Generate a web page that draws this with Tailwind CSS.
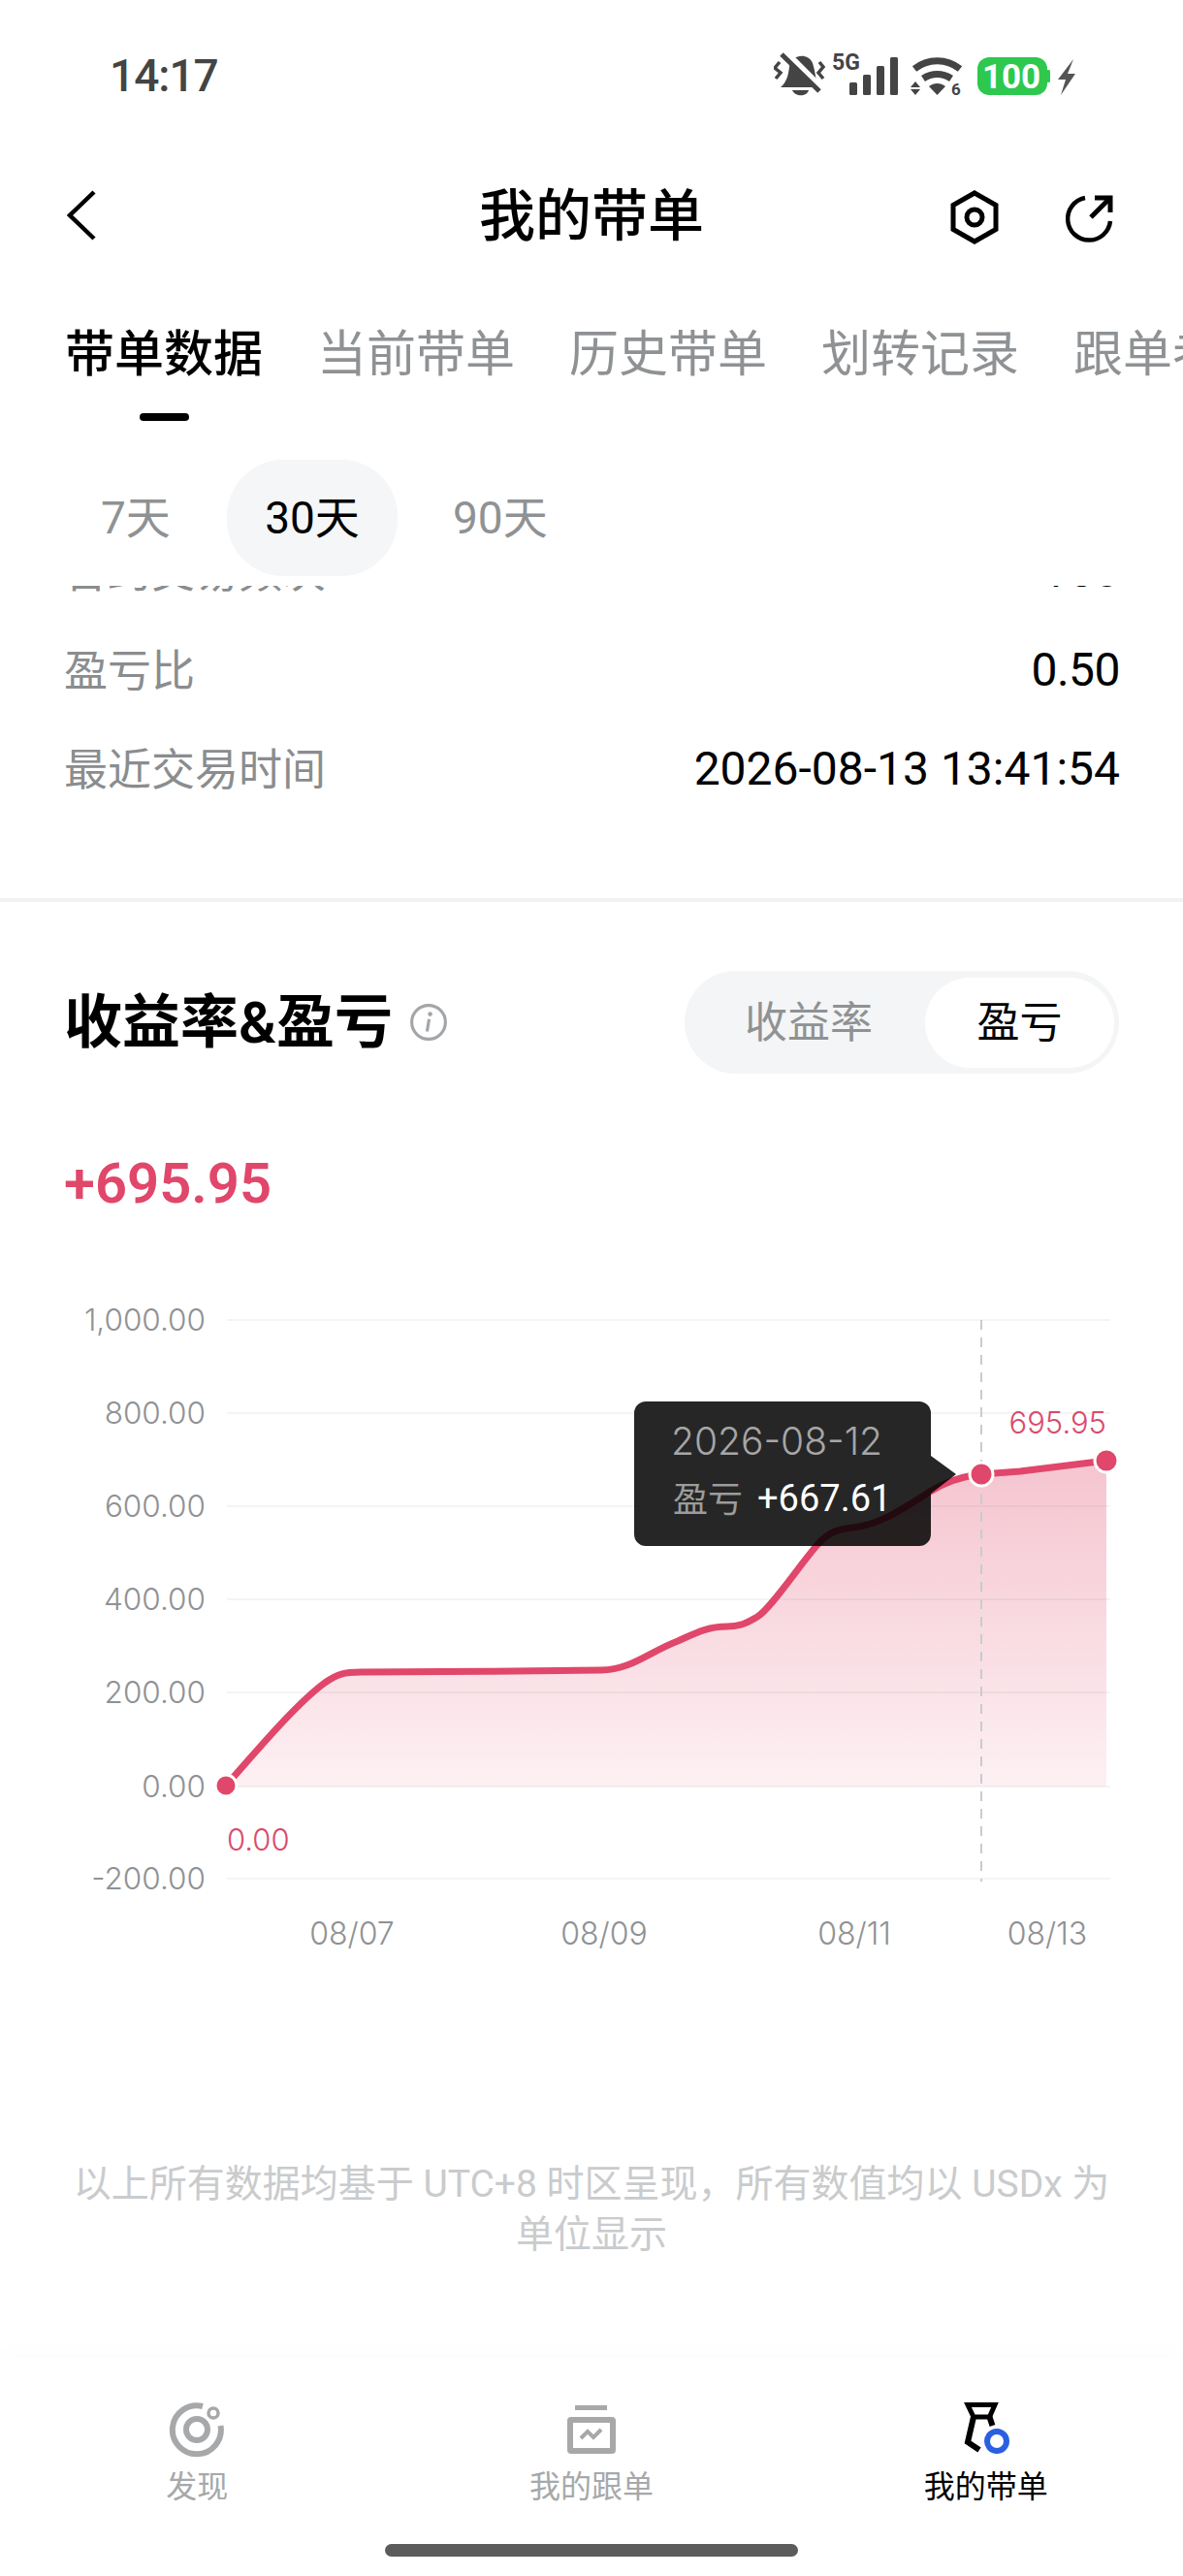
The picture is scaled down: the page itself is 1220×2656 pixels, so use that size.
<!DOCTYPE html>
<html lang="zh-CN">
<head>
<meta charset="utf-8">
<script src="https://cdn.jsdelivr.net/npm/@tailwindcss/browser@4"></script>
</head>
<body class="bg-white">
<div class="w-[1220px] h-[2656px] overflow-hidden bg-white flex flex-col text-black font-['Roboto','Noto_Sans_CJK_SC',sans-serif]">

  <!-- status bar -->
  <div class="h-[156px] shrink-0 relative flex items-center justify-between pl-[113px] pr-[110px]">
    <span class="text-[46px] font-medium text-[#444444] leading-none tracking-[-1px]">14:17</span>
    <svg width="312" height="60" viewBox="798 48 312 60">
      <!-- bell -->
      <path d="M805 90 C812 84 813 76 814 69 C816 56 833 54 838 65 C841 74 841 84 845 90 Z" fill="#444444"/>
      <path d="M817 93 H834 C832 100 820 100 817 93 Z" fill="#444444"/>
      <path d="M811 54 L850 93" stroke="#ffffff" stroke-width="6"/>
      <path d="M806 56 L845 94" stroke="#444444" stroke-width="5"/>
      <path d="M804 64 L799 70 L805 75 L800 81" stroke="#444444" stroke-width="3.500" fill="none"/>
      <path d="M845 64 L849 69 L844 75 L849 81" stroke="#444444" stroke-width="3.500" fill="none"/>
      <!-- 5G -->
      <text x="858" y="72" font-family="Roboto" font-weight="700" font-size="23" fill="#444444">5G</text>
      <rect x="876" y="85" width="8" height="13" rx="1.500" fill="#444444"/>
      <rect x="890" y="77" width="8" height="21" rx="1.500" fill="#444444"/>
      <rect x="904" y="68" width="8" height="30" rx="1.500" fill="#444444"/>
      <rect x="918" y="59" width="8" height="39" rx="1.500" fill="#444444"/>
      <!-- wifi -->
      <path d="M943 71 C957 60 976 60 990 71" stroke="#444444" stroke-width="7" fill="none"/>
      <path d="M952 81 C961 75 972 75 981 81" stroke="#444444" stroke-width="7" fill="none"/>
      <path d="M958 89 C963 85 970 85 975 89 L966.500 98 Z" fill="#444444"/>
      <path d="M944 84 L949 90 H939 Z M939 92 H949 L944 98 Z" fill="#444444"/>
      <text x="981" y="98" font-family="Roboto" font-weight="700" font-size="17" fill="#444444">6</text>
      <!-- battery -->
      <rect x="1008" y="59" width="72" height="39" rx="12" fill="#2dc84d"/>
      <rect x="1079" y="72" width="4" height="13" rx="1.500" fill="#2dc84d"/>
      <text x="1043" y="91" text-anchor="middle" font-family="Roboto" font-weight="700" font-size="35" fill="#ffffff">100</text>
      <!-- bolt -->
      <path d="M1107 61 L1091 82 H1099 L1094 98 L1109 76 H1101 Z" fill="#555555"/>
    </svg>
  </div>

  <!-- title row -->
  <div class="h-[132px] shrink-0 relative flex items-center justify-center">
    <svg class="absolute left-[64px] top-[36px]" width="40" height="60" viewBox="0 0 40 60" fill="none"><path d="M33 6 L8 30 L33 54" stroke="#000" stroke-width="4.500"/></svg>
    <span class="text-[58px] font-medium leading-none pt-[2px]">我的带单</span>
    <svg class="absolute left-[978px] top-[38px]" width="54" height="60" viewBox="978 194 54 60" fill="none">
      <path d="M1005 199 L1027 211.500 V236.500 L1005 249 L983 236.500 V211.500 Z" stroke="#000" stroke-width="5"/>
      <circle cx="1005" cy="224" r="8" stroke="#000" stroke-width="5"/>
    </svg>
    <svg class="absolute left-[1094px] top-[40px]" width="58" height="56" viewBox="1094 196 58 56" fill="none">
      <path d="M1119 204 A22 22 0 1 0 1145 228" stroke="#000" stroke-width="4.500"/>
      <path d="M1125 224 L1144 205" stroke="#000" stroke-width="5"/>
      <path d="M1129 204 H1145 V219" stroke="#000" stroke-width="5"/>
    </svg>
  </div>

  <!-- tabs -->
  <div class="h-[152px] shrink-0 overflow-hidden flex gap-[56px] pl-[67px] whitespace-nowrap text-[51px] text-[#8f9294]">
    <div class="relative shrink-0 h-full flex items-center pt-[5px] font-medium text-black">
      带单数据
      <span class="absolute left-[77px] top-[138px] w-[51px] h-[8px] rounded-full bg-black"></span>
    </div>
    <div class="shrink-0 h-full flex items-center pt-[5px]">当前带单</div>
    <div class="shrink-0 h-full flex items-center pt-[5px]">历史带单</div>
    <div class="shrink-0 h-full flex items-center pt-[5px]">划转记录</div>
    <div class="shrink-0 h-full flex items-center pt-[5px]">跟单者</div>
  </div>

  <!-- period selector -->
  <div class="mt-[34px] mb-[10px] h-[120px] shrink-0 flex items-center pl-[68px] text-[46px] text-[#8f9294]">
    <div class="w-[166px] h-full flex items-center justify-start pl-[36px]">7天</div>
    <div class="w-[176px] h-full flex items-center justify-center rounded-[58px] bg-[#f5f6f7] text-black">30天</div>
    <div class="ml-[57px] h-full flex items-center">90天</div>
  </div>

  <!-- scrolling content -->
  <div class="h-[1828px] shrink-0 overflow-hidden">
    <div class="-mt-[66px] pl-[66px] pr-[65px] text-[45px]">
      <div class="h-[102px] flex items-center justify-between"><span class="pt-[4px] text-[#8a8d8f]">合约交易频次</span><span class="text-[48px]">150</span></div>
      <div class="h-[102px] flex items-center justify-between"><span class="pt-[4px] text-[#8a8d8f]">盈亏比</span><span class="text-[48px] tracking-[-0.5px]">0.50</span></div>
      <div class="h-[102px] flex items-center justify-between"><span class="pt-[4px] text-[#8a8d8f]">最近交易时间</span><span class="text-[48px]">2026-08-13 13:41:54</span></div>
    </div>
    <div class="mt-[82px] h-[4px] bg-[#f1f2f3]"></div>

    <div class="mt-[71px] h-[106px] pl-[66px] pr-[66px] flex items-center justify-between">
      <div class="flex items-center gap-[17px]">
        <span class="text-[60px] font-semibold leading-none pt-[2px]">收益率&amp;盈亏</span>
        <svg width="40" height="40" viewBox="0 0 38 38" fill="none">
          <circle cx="19" cy="19" r="16.500" stroke="#a3a6a8" stroke-width="3"/>
          <circle cx="20.500" cy="11" r="2.200" fill="#a3a6a8"/>
          <path d="M19.500 16 L17.500 28" stroke="#a3a6a8" stroke-width="3"/>
        </svg>
      </div>
      <div class="w-[448px] h-[106px] rounded-full bg-[#f4f5f6] flex items-center text-[44px] pl-[62px] pr-[5px]">
        <span class="text-[#8f9294] pt-[2px]">收益率</span>
        <span class="ml-[54px] w-[195px] h-[93px] pt-[2px] rounded-full bg-white flex items-center justify-center">盈亏</span>
      </div>
    </div>

    <div class="mt-[78px] h-[70px] pl-[66px] flex items-center text-[58px] font-semibold text-[#e0476a] leading-none">+695.95</div>

    <!-- chart -->
    <svg class="mt-[35px] block" width="1220" height="760" viewBox="0 1290 1220 760" fill="none">
      <defs>
        <linearGradient id="areaFill" gradientUnits="userSpaceOnUse" x1="0" y1="1506" x2="0" y2="1842">
          <stop offset="0" stop-color="#e0476a" stop-opacity="0.32"/>
          <stop offset="1" stop-color="#e0476a" stop-opacity="0.08"/>
        </linearGradient>
      </defs>
      <g stroke="#f3f4f5" stroke-width="2">
        <path d="M234 1361 H1145"/><path d="M234 1457 H1145"/><path d="M234 1553 H1145"/><path d="M234 1649 H1145"/><path d="M234 1745 H1145"/><path d="M234 1842 H1145"/><path d="M234 1937 H1145"/>
      </g>
      <g font-family="Inter" font-weight="300" font-size="31.500" fill="#8f9294" text-anchor="end">
        <text x="212" y="1372">1,000.00</text>
        <text x="212" y="1468">800.00</text>
        <text x="212" y="1564">600.00</text>
        <text x="212" y="1660">400.00</text>
        <text x="212" y="1756">200.00</text>
        <text x="212" y="1853">0.00</text>
        <text x="212" y="1948">-200.00</text>
      </g>
      <g font-family="Inter" font-weight="300" font-size="32" fill="#8f9294" text-anchor="middle">
        <text x="363" y="2005">08/07</text>
        <text x="623" y="2005">08/09</text>
        <text x="881" y="2005">08/11</text>
        <text x="1080" y="2005">08/13</text>
      </g>
      <path d="M233 1841 C265 1805 305 1757 335 1735 C348 1726 355 1724 372 1724 C420 1724 560 1723 620 1722 C650 1722 670 1703 699 1692 C715 1685 728 1677 750 1677 C765 1677 772 1672 781 1667 C795 1658 820 1620 841 1595 C852 1582 860 1577 880 1575 C905 1572 925 1560 959 1538 C975 1528 992 1522 1012 1520 L1052 1517 L1141 1506 V1842 H233 Z" fill="url(#areaFill)"/>
      <path d="M1012 1361 V1940" stroke="#c9cbcd" stroke-width="2" stroke-dasharray="10 8"/>
      <path d="M233 1841 C265 1805 305 1757 335 1735 C348 1726 355 1724 372 1724 C420 1724 560 1723 620 1722 C650 1722 670 1703 699 1692 C715 1685 728 1677 750 1677 C765 1677 772 1672 781 1667 C795 1658 820 1620 841 1595 C852 1582 860 1577 880 1575 C905 1572 925 1560 959 1538 C975 1528 992 1522 1012 1520 L1052 1517 L1141 1506" stroke="#e0476a" stroke-width="7"/>
      <circle cx="233" cy="1841" r="11" fill="#e0476a" stroke="#ffffff" stroke-width="3"/>
      <circle cx="1012" cy="1520" r="12" fill="#e0476a" stroke="#ffffff" stroke-width="3"/>
      <circle cx="1141" cy="1506" r="12" fill="#e0476a" stroke="#ffffff" stroke-width="3"/>
      <text x="234" y="1908" font-family="Inter" font-weight="300" font-size="31" fill="#d94c6c">0.00</text>
      <text x="1141" y="1478" text-anchor="end" font-family="Inter" font-weight="300" font-size="31" fill="#d94c6c">695.95</text>
      <path d="M666 1445 H948 A12 12 0 0 1 960 1457 V1501 L986 1520 L960 1540 V1582 A12 12 0 0 1 948 1594 H666 A12 12 0 0 1 654 1582 V1457 A12 12 0 0 1 666 1445 Z" fill="#000000" fill-opacity="0.85"/>
      <text x="692" y="1500" font-family="Inter" font-weight="300" font-size="39" fill="#a6a6a6">2026-08-12</text>
      <text x="694" y="1559" font-family="Noto Sans CJK SC" font-size="36" fill="#9c9c9c">盈亏</text>
      <text x="781" y="1558" font-family="Roboto" font-size="38" fill="#ffffff">+667.61</text>
    </svg>

    <p class="mt-[176px] px-[70px] text-center text-[39px] leading-[52px] text-[#c9cbcd]">以上所有数据均基于 UTC+8 时区呈现，所有数值均以 USDx 为<br>单位显示</p>
  </div>

  <!-- bottom nav -->
  <div class="flex-1 flex flex-col bg-white shadow-[0_-10px_20px_rgba(0,0,0,0.012)]">
    <div class="grid grid-cols-3 pt-[44px] text-[32px] text-[#a6a8aa]">
      <div class="flex flex-col items-center">
        <svg width="60" height="60" viewBox="173 2476 60 60" fill="none">
          <path d="M209 2481 A25 25 0 1 0 227.500 2501" stroke="#a6a8aa" stroke-width="6"/>
          <circle cx="203" cy="2505" r="11" stroke="#a6a8aa" stroke-width="6"/>
          <circle cx="220" cy="2488" r="5" stroke="#a6a8aa" stroke-width="3.500"/>
        </svg>
        <span class="mt-[8px] h-[40px] leading-[40px]">发现</span>
      </div>
      <div class="flex flex-col items-center">
        <svg width="60" height="60" viewBox="581 2476 60 60" fill="none">
          <rect x="594" y="2480" width="33" height="5" fill="#a6a8aa"/>
          <rect x="589" y="2495" width="44" height="32" rx="1" stroke="#a6a8aa" stroke-width="6"/>
          <path d="M600 2514 L607 2507 L613 2513 L621 2505" stroke="#a6a8aa" stroke-width="4"/>
        </svg>
        <span class="mt-[8px] h-[40px] leading-[40px]">我的跟单</span>
      </div>
      <div class="flex flex-col items-center text-black">
        <svg width="60" height="60" viewBox="987 2476 60 60" fill="none">
          <path d="M998 2479.500 H1026 L1020.500 2492 H1004 Z" stroke="#000" stroke-width="5"/>
          <path d="M1004 2492 L998 2518 L1010 2526" stroke="#000" stroke-width="6"/>
          <path d="M1020.500 2492 L1023.500 2501" stroke="#000" stroke-width="6"/>
          <circle cx="1028" cy="2517" r="10" stroke="#2a5fe0" stroke-width="6"/>
        </svg>
        <span class="mt-[8px] h-[40px] leading-[40px]">我的带单</span>
      </div>
    </div>
    <div class="mt-[39px] mx-auto w-[426px] h-[13px] rounded-full bg-[#5c5c5c]"></div>
  </div>
</div>
</body>
</html>
